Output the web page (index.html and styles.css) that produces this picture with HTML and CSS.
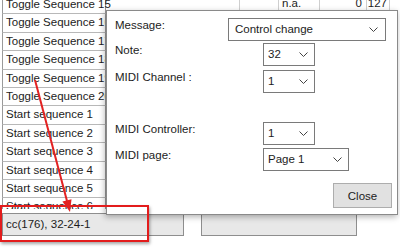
FILE: index.html
```html
<!DOCTYPE html>
<html lang="en">
<head>
    <meta charset="UTF-8">
    <title>MIDI mapping</title>
    <link rel="stylesheet" href="styles.css">
</head>
<body>
    <div class="main">
        <div class="list">
            <div class="row top">Toggle Sequence 15</div>
            <div class="row">Toggle Sequence 16</div>
            <div class="row">Toggle Sequence 17</div>
            <div class="row">Toggle Sequence 18</div>
            <div class="row">Toggle Sequence 19</div>
            <div class="row">Toggle Sequence 20</div>
            <div class="row">Start sequence 1</div>
            <div class="row">Start sequence 2</div>
            <div class="row">Start sequence 3</div>
            <div class="row">Start sequence 4</div>
            <div class="row">Start sequence 5</div>
            <div class="row">Start sequence 6</div>
        </div>
        <div class="cols">
            <div class="cols-row">
                <div class="cell c1"></div>
                <div class="cell c2"></div>
                <div class="cell c3">n.a.</div>
                <div class="cell c4">0</div>
                <div class="cell c5">127</div>
            </div>
        </div>
    </div>

    <div class="status">
        <div class="status-box first">cc(176), 32-24-1</div>
        <div class="status-box second"></div>
    </div>

    <!-- settings dialog -->
    <div class="dialog">
        <div class="field wide">
            <div class="label">Message:</div>
            <div class="select w-msg"><span>Control change</span><svg class="chev" width="9" height="5" viewBox="0 0 9 5"><path d="M0.5 0.5 L4.5 4.5 L8.5 0.5" fill="none" stroke="#444" stroke-width="1"/></svg></div>
        </div>
        <div class="field f-note">
            <div class="label">Note:</div>
            <div class="select w-small"><span>32</span><svg class="chev" width="9" height="5" viewBox="0 0 9 5"><path d="M0.5 0.5 L4.5 4.5 L8.5 0.5" fill="none" stroke="#444" stroke-width="1"/></svg></div>
        </div>
        <div class="field f-channel">
            <div class="label">MIDI Channel :</div>
            <div class="select w-small"><span>1</span><svg class="chev" width="9" height="5" viewBox="0 0 9 5"><path d="M0.5 0.5 L4.5 4.5 L8.5 0.5" fill="none" stroke="#444" stroke-width="1"/></svg></div>
        </div>
        <div class="field f-controller">
            <div class="label">MIDI Controller:</div>
            <div class="select w-small"><span>1</span><svg class="chev" width="9" height="5" viewBox="0 0 9 5"><path d="M0.5 0.5 L4.5 4.5 L8.5 0.5" fill="none" stroke="#444" stroke-width="1"/></svg></div>
        </div>
        <div class="field f-page">
            <div class="label">MIDI page:</div>
            <div class="select w-page"><span>Page 1</span><svg class="chev" width="9" height="5" viewBox="0 0 9 5"><path d="M0.5 0.5 L4.5 4.5 L8.5 0.5" fill="none" stroke="#444" stroke-width="1"/></svg></div>
        </div>
        <div class="footer">
            <button class="close-btn">Close</button>
        </div>
    </div>

    <!-- annotation -->
    <div class="highlight"></div>
    <svg class="arrow" width="400" height="248" viewBox="0 0 400 248">
        <line x1="35" y1="80" x2="67" y2="201" stroke="#e32222" stroke-width="2"/>
        <polygon points="70,212 71.5,199.2 62.4,201.6" fill="#e32222"/>
    </svg>
</body>
</html>
```

FILE: styles.css
```css
* {
    margin: 0;
    padding: 0;
    box-sizing: border-box;
}

body {
    width: 400px;
    height: 248px;
    overflow: hidden;
    position: relative;
    background: #fff;
    color: #1c1c1c;
    font-family: 'Liberation Sans', Arial, sans-serif;
    font-size: 11.5px;
}

.main {
    display: flex;
    height: 209px;
    overflow: hidden;
}

.list {
    width: 106px;
    flex-shrink: 0;
    margin-top: -4px;
    padding-left: 2px;
}

.row {
    height: 18.4px;
    line-height: 17px;
    padding-left: 3px;
    white-space: nowrap;
    overflow: hidden;
    border-left: 1px solid #9a9a9a;
    border-right: 1px solid #9a9a9a;
    border-bottom: 1px solid #b8b8b8;
    background: #fff;
}

.row.top {
    overflow: visible;
}

.cols {
    flex: 1;
}

.cols-row {
    display: flex;
    height: 18.4px;
    margin-top: -5px;
    line-height: 17px;
}

.cell {
    border-right: 1px solid #cfcfcf;
    white-space: nowrap;
}

.c1 { width: 134px; }
.c2 { width: 39px; }
.c3 { width: 41px; padding-left: 3px; }
.c4 { width: 47px; text-align: right; padding-right: 4px; }
.c5 { width: 23px; text-align: right; padding-right: 2px; }

.status {
    display: flex;
    gap: 17px;
    margin-top: 4px;
    padding-left: 2px;
}

.status-box {
    height: 23px;
    line-height: 21px;
    background: #e8e8e8;
    border: 1px solid #8e8e8e;
    padding-left: 3px;
}

.status-box.first { width: 182px; }
.status-box.second { width: 156px; }

.dialog {
    position: absolute;
    left: 106px;
    top: 10px;
    width: 292px;
    height: 205px;
    background: #fff;
    border: 1px solid #8a8a8a;
    box-shadow: -1px 2px 6px rgba(0, 0, 0, 0.3);
    display: flex;
    flex-direction: column;
    padding: 7px 5px 6px 8px;
}

.field {
    display: flex;
    align-items: flex-start;
}

.label {
    width: 148px;
    line-height: 15px;
    white-space: nowrap;
}

.field.wide .label { width: 113px; }

.f-note { margin-top: 2px; }
.f-channel { margin-top: 4px; }
.f-controller { margin-top: 29px; }
.f-page { margin-top: 3px; }

.select {
    height: 23px;
    border: 1px solid #7a7a7a;
    background: #fff;
    display: flex;
    align-items: center;
    justify-content: space-between;
    padding: 0 6px 0 4px;
}

.select span {
    line-height: 15px;
}

.w-msg { width: 158px; padding: 0 7px 0 6px; }
.w-small { width: 52px; }
.w-page { width: 86px; }

.footer {
    margin-top: auto;
    display: flex;
    justify-content: flex-end;
}

.close-btn {
    width: 59px;
    height: 25px;
    background: #e1e1e1;
    border: 1px solid #adadad;
    color: #1c1c1c;
    font-family: 'Liberation Sans', Arial, sans-serif;
    font-size: 11.5px;
}

.highlight {
    position: absolute;
    left: 0;
    top: 205px;
    width: 149px;
    height: 37px;
    border: 2.5px solid #e31c1c;
    box-shadow: 1px 2px 3px rgba(0, 0, 0, 0.35);
}

.arrow {
    position: absolute;
    left: 0;
    top: 0;
}
```
